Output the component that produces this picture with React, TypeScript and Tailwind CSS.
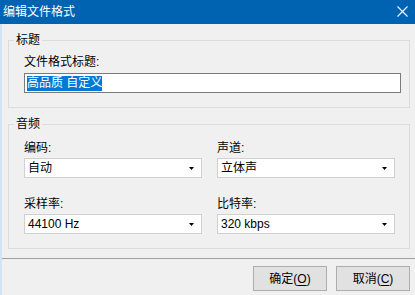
import React from "react";

const font = {
  fontFamily: '"Liberation Sans", "Noto Sans CJK SC", sans-serif',
};

const ComboBox: React.FC<{ value: string }> = ({ value }) => (
  <div className="flex h-5 items-center justify-between border border-[#d0d0d0] bg-white pl-[3px] pr-[7px]">
    <span className="leading-4">{value}</span>
    <svg width="5" height="3" viewBox="0 0 5 3">
      <path d="M0 0h5L2.5 3z" fill="#000" />
    </svg>
  </div>
);

const Field: React.FC<{ label: string; value: string; top?: string }> = ({
  label,
  value,
  top = "",
}) => (
  <div className={`flex flex-col ${top}`}>
    <span className="leading-4">{label}</span>
    <div className="mt-[2px]">
      <ComboBox value={value} />
    </div>
  </div>
);

const DialogButton: React.FC<{ text: string; hotkey: string }> = ({
  text,
  hotkey,
}) => (
  <button className="flex h-[25px] w-[74px] items-center justify-center border border-[#adadad] bg-[#e1e1e1] text-[12px] text-black">
    {text}(<span className="underline underline-offset-2">{hotkey}</span>)
  </button>
);

export default function App() {
  return (
    <div
      className="flex h-[295px] w-[415px] flex-col overflow-hidden bg-[#f0f0f0] text-[12px] text-black"
      style={font}>
      {/* Title bar */}
      <div className="flex h-6 shrink-0 items-center justify-between bg-[#0063b1] pl-[3px] pr-[7px] text-white">
        <span className="leading-4">编辑文件格式</span>
        <svg width="11" height="11" viewBox="0 0 11 11" className="mb-px">
          <path d="M0.5 0.5L10.5 10.5M10.5 0.5L0.5 10.5" stroke="#fff" strokeWidth="1.1" />
        </svg>
      </div>

      <div className="flex flex-1 flex-col border-l-2 border-[#d3e5f5]">
        <div className="pl-[6px]">
          {/* 标题 */}
          <fieldset className="mt-2 w-[402px] border border-[#dcdcdc] px-[5px]">
            <legend className="px-[2px] leading-4">标题</legend>
            <div className="flex flex-col pb-[14px] pl-[10px] pr-[3px] pt-[6px]">
              <span className="leading-4">文件格式标题:</span>
              <div className="mt-[3px] flex h-5 items-center border border-[#7a7a7a] bg-white pl-[2px]">
                <span className="inline-block bg-[#0078d7] leading-[15px] text-white">
                  高品质 自定义
                </span>
              </div>
            </div>
          </fieldset>

          {/* 音频 */}
          <fieldset className="mt-2 w-[402px] border border-[#dcdcdc] px-[5px]">
            <legend className="px-[2px] leading-4">音频</legend>
            <div className="grid grid-cols-2 gap-x-[15px] pb-[14px] pl-[10px] pr-[9px] pt-[8px]">
              <Field label="编码:" value="自动" />
              <Field label="声道:" value="立体声" />
              <Field label="采样率:" value="44100 Hz" top="mt-[18px]" />
              <Field label="比特率:" value="320 kbps" top="mt-[18px]" />
            </div>
          </fieldset>
        </div>

        {/* Footer */}
        <div className="mt-[9px] border-t border-[#a0a0a0]" />
        <div className="flex justify-end gap-[9px] pr-[5px] pt-[7px]">
          <DialogButton text="确定" hotkey="O" />
          <DialogButton text="取消" hotkey="C" />
        </div>
      </div>
    </div>
  );
}
